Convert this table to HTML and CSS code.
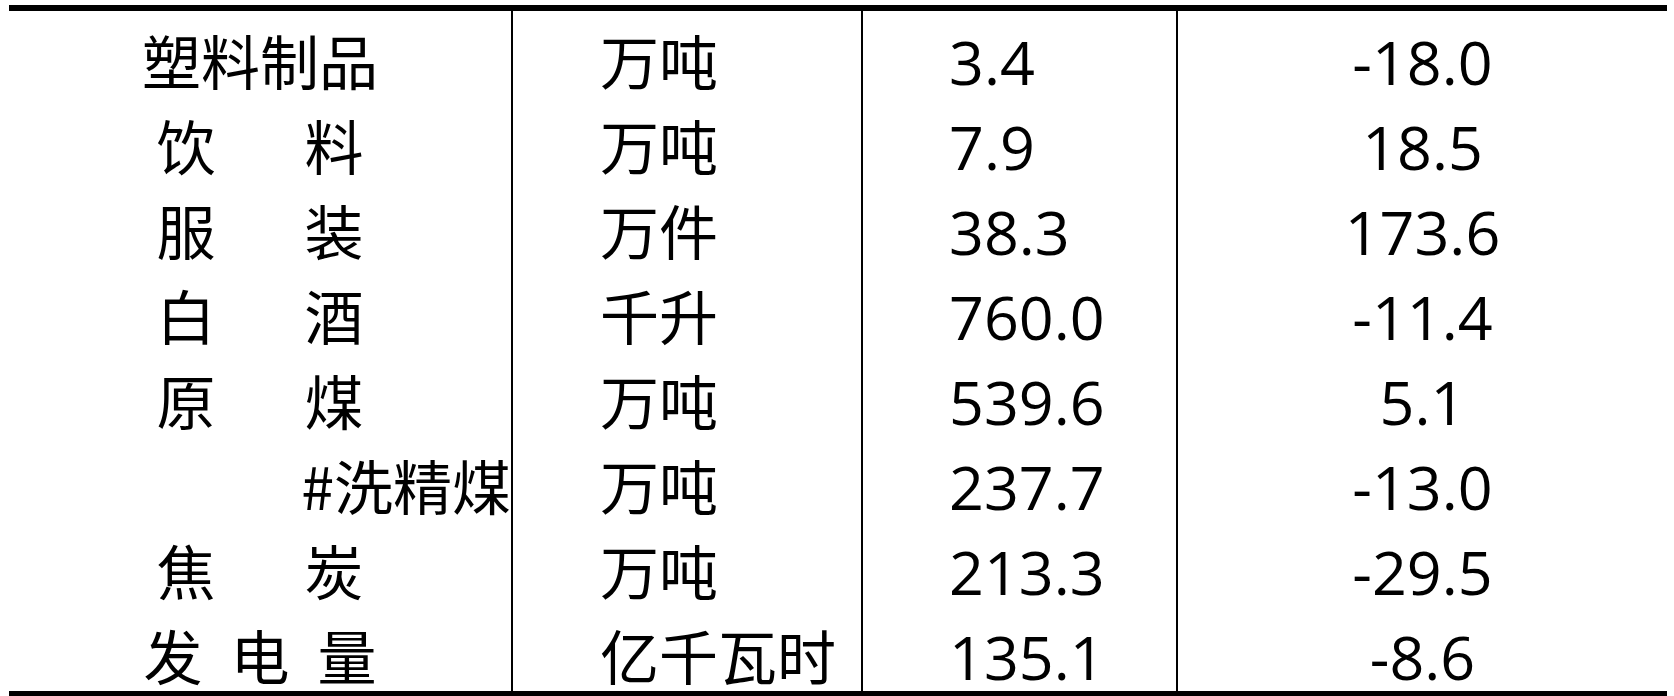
FILE: index.html
```html
<!DOCTYPE html>
<html lang="zh-CN">
<head>
<meta charset="utf-8">
<title>工业产品产量</title>
<link rel="stylesheet" href="styles.css">
</head>
<body>
<div class="sheet">
  <div class="row">
    <div class="cell name">塑料制品</div>
    <div class="cell unit">万吨</div>
    <div class="cell val">3.4</div>
    <div class="cell pct">-18.0</div>
  </div>
  <div class="row">
    <div class="cell name"><span class="spread two"><span>饮</span><span>料</span></span></div>
    <div class="cell unit">万吨</div>
    <div class="cell val">7.9</div>
    <div class="cell pct">18.5</div>
  </div>
  <div class="row">
    <div class="cell name"><span class="spread two"><span>服</span><span>装</span></span></div>
    <div class="cell unit">万件</div>
    <div class="cell val">38.3</div>
    <div class="cell pct">173.6</div>
  </div>
  <div class="row">
    <div class="cell name"><span class="spread two"><span>白</span><span>酒</span></span></div>
    <div class="cell unit">千升</div>
    <div class="cell val">760.0</div>
    <div class="cell pct">-11.4</div>
  </div>
  <div class="row">
    <div class="cell name"><span class="spread two"><span>原</span><span>煤</span></span></div>
    <div class="cell unit">万吨</div>
    <div class="cell val">539.6</div>
    <div class="cell pct">5.1</div>
  </div>
  <div class="row">
    <div class="cell name sub">#洗精煤</div>
    <div class="cell unit">万吨</div>
    <div class="cell val">237.7</div>
    <div class="cell pct">-13.0</div>
  </div>
  <div class="row">
    <div class="cell name"><span class="spread two"><span>焦</span><span>炭</span></span></div>
    <div class="cell unit">万吨</div>
    <div class="cell val">213.3</div>
    <div class="cell pct">-29.5</div>
  </div>
  <div class="row">
    <div class="cell name"><span class="spread three"><span>发</span><span>电</span><span>量</span></span></div>
    <div class="cell unit">亿千瓦时</div>
    <div class="cell val">135.1</div>
    <div class="cell pct">-8.6</div>
  </div>
</div>
</body>
</html>
```

FILE: styles.css
```css
* {
  box-sizing: border-box;
}

html, body {
  margin: 0;
  padding: 0;
  background: #ffffff;
}

body {
  width: 1674px;
  height: 696px;
  overflow: hidden;
  color: #000000;
  font-family: "Noto Sans CJK SC", "Noto Sans", sans-serif;
}

.sheet {
  margin: 5px 0 0 9px;
  width: 1658px;
  border-top: 6px solid #000;
  border-bottom: 6px solid #000;
}

.row {
  display: grid;
  grid-template-columns: 504px 350px 315px 489px;
  height: 85px;
}

.cell {
  display: flex;
  align-items: flex-end;
  font-size: 59px;
  line-height: 59px;
  padding-bottom: 7px;
  white-space: nowrap;
}

.cell.name,
.cell.unit,
.cell.val {
  border-right: 2px solid #000;
}

.name {
  justify-content: center;
}

.name.sub {
  justify-content: flex-end;
  padding-right: 0;
}

.spread {
  display: inline-flex;
}

.spread.two {
  gap: 89px;
}

.spread.three {
  gap: 28px;
}

.unit {
  padding-left: 87px;
}

.val,
.pct {
  font-family: "Open Sans", "Noto Sans CJK SC", sans-serif;
  font-size: 61px;
  line-height: 61px;
  padding-bottom: 4px;
}

.val {
  padding-left: 86px;
}

.pct {
  justify-content: center;
}
```
